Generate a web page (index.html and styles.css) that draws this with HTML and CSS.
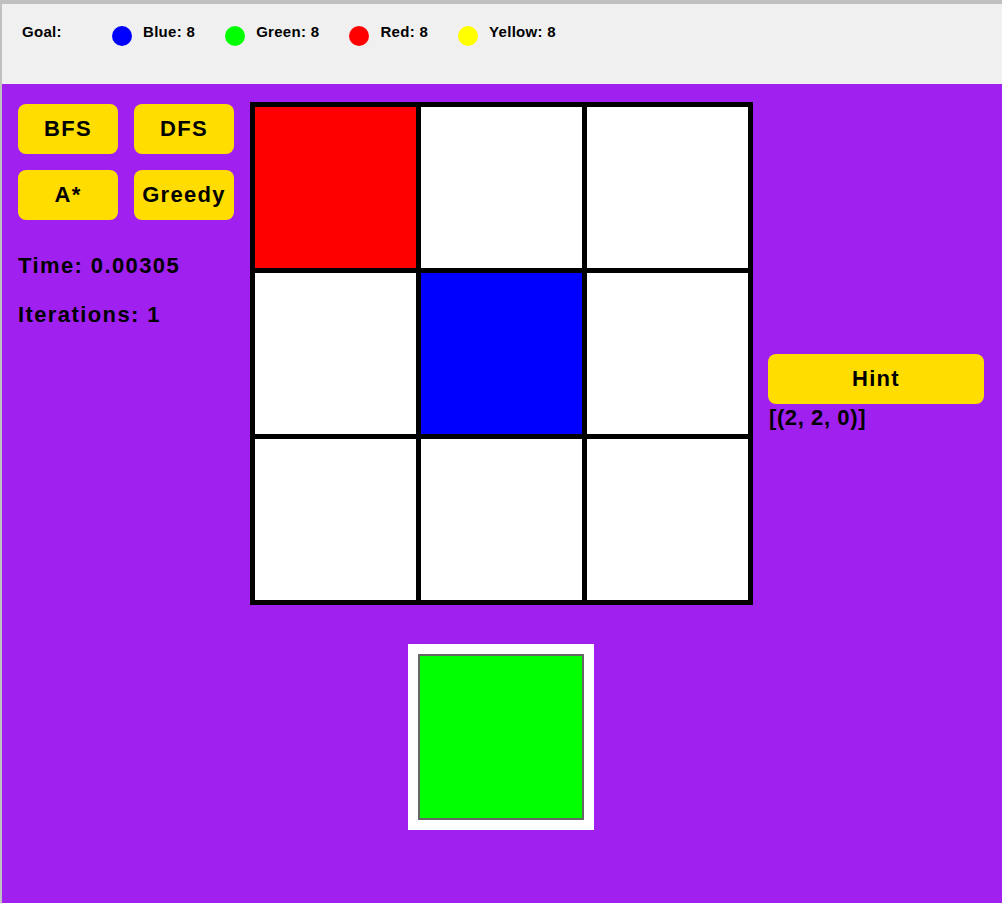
FILE: index.html
```html
<!DOCTYPE html>
<html>
<head>
<meta charset="utf-8">
<title>Color Puzzle Solver</title>
<link rel="stylesheet" href="styles.css">
</head>
<body>
<div class="window">
  <header class="topbar">
    <span class="goal-label">Goal:</span>
    <div class="goal-item">
      <span class="dot dot-blue"></span>
      <span class="goal-text">Blue: 8</span>
    </div>
    <div class="goal-item">
      <span class="dot dot-green"></span>
      <span class="goal-text">Green: 8</span>
    </div>
    <div class="goal-item">
      <span class="dot dot-red"></span>
      <span class="goal-text">Red: 8</span>
    </div>
    <div class="goal-item">
      <span class="dot dot-yellow"></span>
      <span class="goal-text">Yellow: 8</span>
    </div>
  </header>
  <main class="main">
    <section class="left-panel">
      <div class="algo-buttons">
        <button class="btn">BFS</button>
        <button class="btn">DFS</button>
        <button class="btn">A*</button>
        <button class="btn">Greedy</button>
      </div>
      <div class="stat stat-time">Time: 0.00305</div>
      <div class="stat stat-iter">Iterations: 1</div>
    </section>
    <section class="board-column">
      <div class="board">
        <div class="cell cell-red"></div>
        <div class="cell"></div>
        <div class="cell"></div>
        <div class="cell"></div>
        <div class="cell cell-blue"></div>
        <div class="cell"></div>
        <div class="cell"></div>
        <div class="cell"></div>
        <div class="cell"></div>
      </div>
      <div class="piece-frame">
        <div class="piece"></div>
      </div>
    </section>
    <section class="right-panel">
      <button class="btn btn-hint">Hint</button>
      <div class="hint-text">[(2, 2, 0)]</div>
    </section>
  </main>
</div>
</body>
</html>
```

FILE: styles.css
```css
html, body {
  margin: 0;
  padding: 0;
  height: 100%;
}

body {
  background: #c0c0c0;
  font-family: "Liberation Sans", Arial, sans-serif;
  overflow: hidden;
}

.window {
  padding: 4px 0 0 2px;
  height: 100%;
  box-sizing: border-box;
  display: flex;
  flex-direction: column;
}

.topbar {
  height: 80px;
  flex: none;
  background: #f0f0f0;
  box-sizing: border-box;
  padding: 19px 0 0 20px;
  display: flex;
  align-items: flex-start;
  gap: 30px;
}

.goal-label,
.goal-text {
  font-size: 15px;
  font-weight: bold;
  line-height: 17px;
  letter-spacing: 0.3px;
  color: #000;
}

.goal-label {
  width: 60px;
}

.goal-item {
  display: flex;
  align-items: flex-start;
  gap: 11px;
}

.dot {
  width: 20px;
  height: 20px;
  border-radius: 50%;
  margin-top: 3px;
}

.dot-blue { background: #0000ff; }
.dot-green { background: #00ff00; }
.dot-red { background: #ff0000; }
.dot-yellow { background: #ffff00; }

.main {
  flex: 1;
  background: #a020f0;
  display: flex;
  align-items: flex-start;
  padding: 18px 0 0 16px;
}

.left-panel {
  width: 216px;
  margin-top: 2px;
  display: flex;
  flex-direction: column;
}

.algo-buttons {
  display: grid;
  grid-template-columns: 100px 100px;
  grid-auto-rows: 50px;
  gap: 16px;
}

.btn {
  border: none;
  margin: 0;
  padding: 0;
  background: #ffdd00;
  border-radius: 8px;
  font-family: "Liberation Sans", Arial, sans-serif;
  font-weight: bold;
  font-size: 22px;
  letter-spacing: 1.3px;
  color: #000;
  display: flex;
  align-items: center;
  justify-content: center;
  line-height: 24px;
  white-space: nowrap;
}

.stat {
  font-size: 22px;
  font-weight: bold;
  line-height: 24px;
  letter-spacing: 1.4px;
  color: #000;
}

.stat-time { margin-top: 34px; }
.stat-iter { margin-top: 25px; }

.board-column {
  margin-left: 16px;
  display: flex;
  flex-direction: column;
  align-items: center;
}

.board {
  display: grid;
  grid-template-columns: repeat(3, 161px);
  grid-template-rows: repeat(3, 161px);
  gap: 5px;
  padding: 5px;
  background: #000;
}

.cell { background: #ffffff; }
.cell-red { background: #ff0000; }
.cell-blue { background: #0000ff; }

.piece-frame {
  margin-top: 39px;
  margin-right: 1px;
  background: #ffffff;
  padding: 10px;
}

.piece {
  width: 162px;
  height: 162px;
  background: #00ff00;
  border: 2px solid #666666;
}

.right-panel {
  margin-left: 15px;
  margin-top: 252px;
  display: flex;
  flex-direction: column;
}

.btn-hint {
  width: 216px;
  height: 50px;
}

.hint-text {
  margin-top: 2px;
  font-size: 22px;
  font-weight: bold;
  line-height: 24px;
  letter-spacing: 0.6px;
  color: #000;
  padding-left: 1px;
}
```
